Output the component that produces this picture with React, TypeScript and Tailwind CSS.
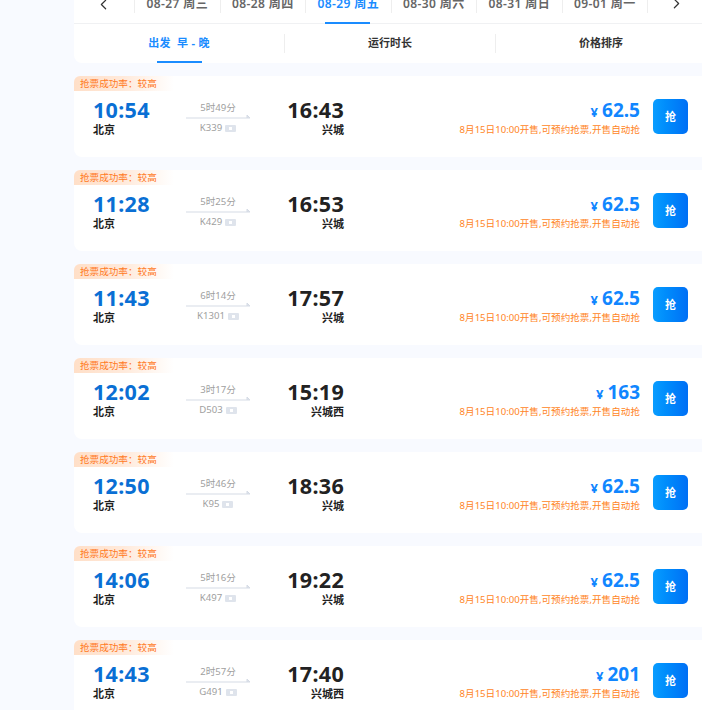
import React from "react";
import { ChevronLeft, ChevronRight } from "lucide-react";

const font = { fontFamily: '"Noto Sans","Noto Sans CJK SC",sans-serif' };

const dates = ["08-27 周三", "08-28 周四", "08-29 周五", "08-30 周六", "08-31 周日", "09-01 周一"];
const notice = "8月15日10:00开售,可预约抢票,开售自动抢";
const trains = [
  ["10:54", "16:43", "5时49分", "K339", "兴城", "62.5"],
  ["11:28", "16:53", "5时25分", "K429", "兴城", "62.5"],
  ["11:43", "17:57", "6时14分", "K1301", "兴城", "62.5"],
  ["12:02", "15:19", "3时17分", "D503", "兴城西", "163"],
  ["12:50", "18:36", "5时46分", "K95", "兴城", "62.5"],
  ["14:06", "19:22", "5时16分", "K497", "兴城", "62.5"],
  ["14:43", "17:40", "2时57分", "G491", "兴城西", "201"],
];

function Card({ t }: { t: string[] }) {
  return (
    <div className="h-[81px] shrink-0 rounded-l-[8px] bg-white">
      <div className="flex h-[15px] w-[100px] items-center rounded-tl-[6px] bg-gradient-to-r from-[#ffdfc8] via-[#ffeadb] to-white pl-[6px] text-[9.6px] leading-[14px] whitespace-nowrap text-[#ff7a1f]">
        抢票成功率：较高
      </div>
      <div className="flex h-[66px] pt-[7px]">
        <div className="w-[112px] shrink-0 pl-[19px]">
          <div className="text-[21.5px] leading-[24px] font-bold tracking-[0.3px] text-[#0a6fd4]">{t[0]}</div>
          <div className="mt-[1px] text-[11px] leading-[14px] font-bold text-[#222]">北京</div>
        </div>
        <div className="flex w-[64px] shrink-0 flex-col items-center">
          <div className="h-[15px] pt-[3px] text-[9.6px] leading-[14px] text-[#a0a0a0]">{t[2]}</div>
          <svg className="mt-[1px] block" width="64" height="5" viewBox="0 0 64 5">
            <path d="M0 4H64L61 1V4" fill="#dfe4ec" stroke="#d5dbe5" strokeWidth="1" />
          </svg>
          <div className="mt-[2px] flex items-center gap-[3px] text-[9.6px] leading-[14px] text-[#a0a0a0]">
            {t[3]}
            <span className="flex h-[7px] w-[11px] items-center justify-center rounded-[1px] bg-[#dfe4ec]">
              <span className="h-[3px] w-[3px] bg-white" />
            </span>
          </div>
        </div>
        <div className="w-[94px] shrink-0 text-right">
          <div className="text-[21.5px] leading-[24px] font-bold tracking-[0.3px] text-[#222]">{t[1]}</div>
          <div className="mt-[1px] text-[11px] leading-[14px] font-bold text-[#222]">{t[4]}</div>
        </div>
        <div className="flex-1 text-right">
          <div className="flex h-[24px] items-baseline justify-end font-bold text-[#1186ff]">
            <span className="mr-[4px] text-[13px]">¥</span>
            <span className="text-[19px] leading-[24px]">{t[5]}</span>
          </div>
          <div className="mt-[1px] text-[9.6px] leading-[14px] whitespace-nowrap text-[#ff8526]">{notice}</div>
        </div>
        <div className="mt-[1px] mr-[14px] ml-[13px] h-[35px] w-[35px] shrink-0 rounded-[5px] bg-gradient-to-r from-[#0a9dff] to-[#006ff5] text-center text-[11px] leading-[35px] font-bold text-white">
          抢
        </div>
      </div>
    </div>
  );
}

export default function App() {
  return (
    <div className="h-[710px] w-[702px] overflow-hidden bg-[#f8faff] pl-[74px]" style={font}>
      <div className="overflow-hidden rounded-bl-[8px] bg-white">
        <div className="flex h-[24px] border-b border-[#f0f1f3]">
          <div className="flex w-[60px] shrink-0 justify-center text-[#333]">
            <ChevronLeft size={17} strokeWidth={1.7} className="-mt-[4px] -ml-[1px]" />
          </div>
          {dates.map((d, i) => (
            <div key={d} className="relative h-[23px] w-[85.5px] shrink-0 pl-[1px]">
              <div className="absolute top-0 left-0 h-[13px] w-px bg-[#eeeeee]" />
              <div
                className={
                  "-mt-[5px] text-center text-[12px] leading-[18px] font-semibold tracking-[0.4px] whitespace-nowrap " +
                  (i === 2 ? "text-[#1a8cff]" : "text-[#666]")
                }
              >
                {d}
              </div>
              {i === 2 && <div className="absolute bottom-[-1px] left-[20px] h-[2px] w-[45px] bg-[#1a8cff]" />}
            </div>
          ))}
          <div className="relative flex flex-1 justify-center text-[#333]">
            <div className="absolute top-0 left-0 h-[13px] w-px bg-[#eeeeee]" />
            <ChevronRight size={17} strokeWidth={1.7} className="-mt-[5px] ml-[3px]" />
          </div>
        </div>
        <div className="grid h-[39px] grid-cols-[210px_211px_211px] text-[11px] font-bold text-[#333]">
          <div className="relative flex items-center justify-center tracking-[0.3px] text-[#1a8cff]">
            出发&nbsp;&nbsp;早&nbsp;-&nbsp;晚
            <div className="absolute bottom-0 left-[83px] h-[2px] w-[45px] bg-[#1a8cff]" />
          </div>
          <div className="flex items-center justify-center">
            <div className="flex h-[19px] w-full items-center justify-center border-l border-[#eeeeee]">运行时长</div>
          </div>
          <div className="flex items-center justify-center">
            <div className="flex h-[19px] w-full items-center justify-center border-l border-[#eeeeee]">价格排序</div>
          </div>
        </div>
      </div>
      <div className="mt-[13px] flex flex-col gap-[13px]">
        {trains.map((t) => (
          <Card key={t[0]} t={t} />
        ))}
      </div>
    </div>
  );
}
